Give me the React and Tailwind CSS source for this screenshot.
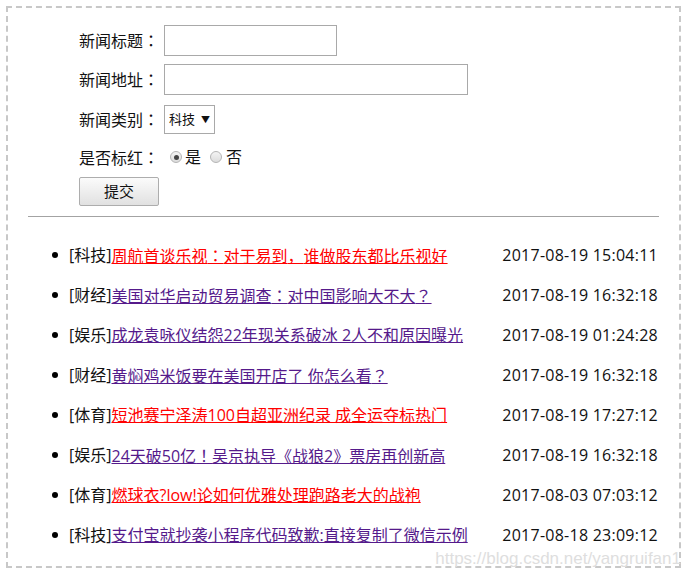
const NEWS = [
  { cat: '科技', title: '周航首谈乐视：对于易到，谁做股东都比乐视好', time: '2017-08-19 15:04:11', red: true },
  { cat: '财经', title: '美国对华启动贸易调查：对中国影响大不大？', time: '2017-08-19 16:32:18', red: false },
  { cat: '娱乐', title: '成龙袁咏仪结怨22年现关系破冰 2人不和原因曝光', time: '2017-08-19 01:24:28', red: false },
  { cat: '财经', title: '黄焖鸡米饭要在美国开店了 你怎么看？', time: '2017-08-19 16:32:18', red: false },
  { cat: '体育', title: '短池赛宁泽涛100自超亚洲纪录 成全运夺标热门', time: '2017-08-19 17:27:12', red: true },
  { cat: '娱乐', title: '24天破50亿！吴京执导《战狼2》票房再创新高', time: '2017-08-19 16:32:18', red: false },
  { cat: '体育', title: '燃球衣?low!论如何优雅处理跑路老大的战袍', time: '2017-08-03 07:03:12', red: true },
  { cat: '科技', title: '支付宝就抄袭小程序代码致歉:直接复制了微信示例', time: '2017-08-18 23:09:12', red: false },
];

const JP = { fontFamily: '"Noto Sans CJK JP", sans-serif' };

// full-width punctuation sits centred in the reference font
const Punct = ({ text }) =>
  text.split(/([：，？！])/).map((part, i) =>
    /^[：，？！]$/.test(part) ? <span key={i} style={JP}>{part}</span> : <span key={i}>{part}</span>
  );

const Radio = ({ checked }) => (
  <span className="inline-flex items-center justify-center w-[12px] h-[12px] rounded-full border border-[#b5b5b5] bg-gradient-to-b from-[#f4f4f4] to-[#dcdcdc]">
    {checked && <span className="w-[5px] h-[5px] rounded-full bg-[#444]" />}
  </span>
);

const Label = ({ children, w = 'w-[85px]' }) => (
  <span className={w}>
    {children}
    <span style={JP}>：</span>
  </span>
);

export default function App() {
  return (
    <div className="bg-white w-[685px] h-[575px] pt-[6px] text-[16px] text-[#111]" style={{ fontFamily: '"Open Sans", "Noto Sans CJK SC", sans-serif' }}>
      <div className="relative ml-[6px] w-[675px] h-[562px] border-2 border-dashed border-[#c8c8c8] px-[20px] pt-[17px]">
        {/* Form */}
        <div className="pl-[51px] flex flex-col">
          <div className="flex items-center h-[31px]">
            <Label>新闻标题</Label>
            <div className="w-[173px] h-[31px] border border-[#a9a9a9]" />
          </div>
          <div className="flex items-center h-[31px] mt-[8px]">
            <Label>新闻地址</Label>
            <div className="w-[304px] h-[31px] border border-[#a9a9a9]" />
          </div>
          <div className="flex items-center h-[29px] mt-[10px]">
            <Label>新闻类别</Label>
            <div className="w-[51px] h-[29px] border border-[#a9a9a9] flex items-center pl-[4px] text-[13px]">
              <span>科技</span>
              <span className="ml-[6px] text-[9px]">▼</span>
            </div>
          </div>
          <div className="flex items-center h-[30px] mt-[8px]">
            <Label w="w-[91px]">是否标红</Label>
            <Radio checked />
            <span className="ml-[3px]">是</span>
            <span className="ml-[9px] flex"><Radio /></span>
            <span className="ml-[4px]">否</span>
          </div>
          <button className="mt-[5px] w-[80px] h-[29px] border border-[#adadad] rounded-[2px] bg-gradient-to-b from-[#fbfbfb] to-[#e1e1e1] text-[15px] flex items-center justify-center">
            提交
          </button>
        </div>

        <div className="mt-[10px] border-t border-[#a3a3a3]" />

        {/* News list */}
        <ul className="pt-[18px] pl-[41px]">
          {NEWS.map((n, i) => (
            <li key={i} className="h-[40px] flex items-center justify-between">
              <div className="flex items-center">
                <span className="w-[6px] h-[6px] rounded-full bg-black -ml-[17px] mr-[11px]" />
                <span>[{n.cat}]</span>
                <a href="#" className={`underline ${n.red ? 'text-[#ff0000]' : 'text-[#551a8b]'}`}>
                  <Punct text={n.title} />
                </a>
              </div>
              <span className="pr-[1px] tracking-[0.25px]">{n.time}</span>
            </li>
          ))}
        </ul>

        <span className="absolute right-[-2px] bottom-[-1px] text-[17px] text-[#dedede] leading-none" style={{ fontFamily: '"Liberation Sans", sans-serif' }}>
          https://blog.csdn.net/yangruifan1
        </span>
      </div>
    </div>
  );
}
